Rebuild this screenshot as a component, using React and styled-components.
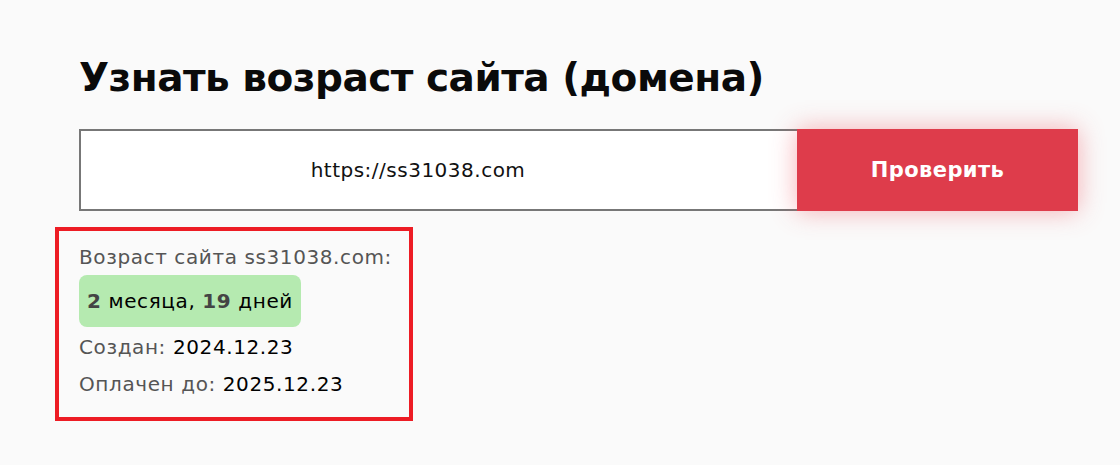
import React from 'react';
import styled, { createGlobalStyle } from 'styled-components';

const GlobalStyle = createGlobalStyle`
  html, body {
    margin: 0;
    padding: 0;
    background: #fafafa;
    font-family: 'DejaVu Sans', 'Open Sans', sans-serif;
  }
`;

const Page = styled.div`
  padding: 55px 0 0 79px;
  width: 998px;
`;

const Title = styled.h1`
  margin: 0 0 29px;
  font: 700 39px 'DejaVu Sans', sans-serif;
  color: #0a0a0a;
  letter-spacing: -0.5px;
`;

const Form = styled.form`
  display: flex;
  height: 82px;
`;

const UrlInput = styled.input`
  flex: 0 0 718px;
  box-sizing: border-box;
  border: 2px solid #777;
  border-right: none;
  padding: 0 42px 0 0;
  background: #fff;
  text-align: center;
  font: 400 20px 'DejaVu Sans', sans-serif;
  letter-spacing: 0.5px;
  color: #111;
  outline: none;
`;

const SubmitButton = styled.button`
  flex: 0 0 281px;
  border: none;
  background: #de3c4b;
  color: #fff;
  font: 700 21px 'DejaVu Sans', sans-serif;
  letter-spacing: 0.4px;
  box-shadow: 0 0 24px rgba(240, 80, 90, 0.45);
  cursor: pointer;
`;

const Result = styled.div`
  margin: 16px 0 0 -24px;
  width: 358px;
  box-sizing: border-box;
  border: 4px solid #ed1c24;
  padding: 13px 20px 14px;
  display: flex;
  flex-direction: column;
  align-items: flex-start;
  font: 400 20px 'DejaVu Sans', sans-serif;
  letter-spacing: 0.6px;
  color: #555;
`;

const Line = styled.div`
  line-height: ${(p) => (p.$tall ? '37px' : '26px')};
  white-space: nowrap;
`;

const Value = styled.span`
  color: #000;
`;

const Badge = styled.div`
  margin: 5px 0 2px;
  background: #b5eab0;
  border-radius: 8px;
  padding: 12px 8px;
  color: #000;
  line-height: 28px;
  b {
    color: #444;
  }
`;

export default function App() {
  return (
    <>
      <GlobalStyle />
      <Page>
        <Title>Узнать возраст сайта (домена)</Title>
        <Form onSubmit={(e) => e.preventDefault()}>
          <UrlInput type="text" defaultValue="https://ss31038.com" />
          <SubmitButton type="submit">Проверить</SubmitButton>
        </Form>
        <Result>
          <Line>Возраст сайта ss31038.com:</Line>
          <Badge>
            <b>2</b> месяца, <b>19</b> дней
          </Badge>
          <Line $tall>
            Создан: <Value>2024.12.23</Value>
          </Line>
          <Line $tall>
            Оплачен до: <Value>2025.12.23</Value>
          </Line>
        </Result>
      </Page>
    </>
  );
}
